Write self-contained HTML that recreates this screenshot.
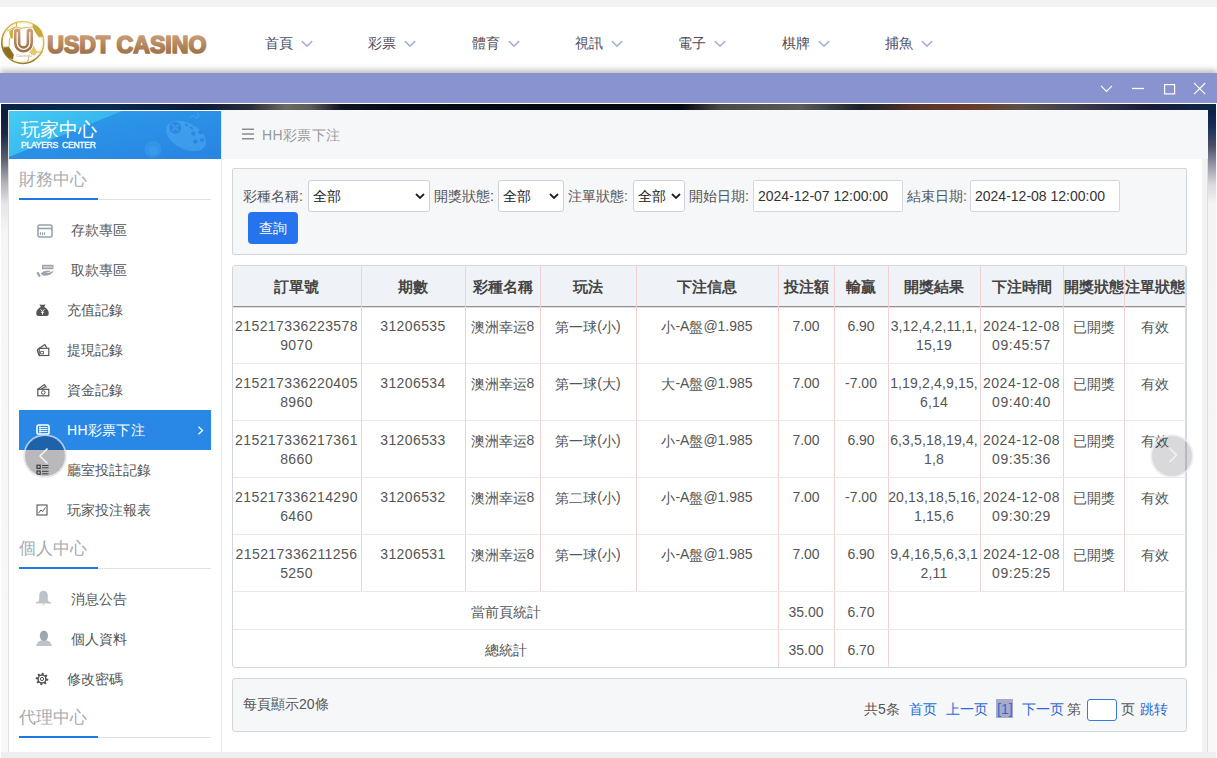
<!DOCTYPE html>
<html><head><meta charset="utf-8">
<style>
*{margin:0;padding:0;box-sizing:border-box}
html,body{width:1217px;height:758px;overflow:hidden;background:#f3f3f3;font-family:"Liberation Sans",sans-serif;color:#555}
.a{position:absolute}
#hdr{left:0;top:7px;width:1217px;height:66px;background:#fff}
.nav{top:34px;font-size:14px;color:#4d4d5c;line-height:18px;white-space:nowrap}
.nav svg{position:absolute;left:36px;top:6px}
#tb{left:0;top:73px;width:1217px;height:30px;background:#8893cf;box-shadow:0 -3px 6px rgba(0,0,0,.26)}
#frame{left:1px;top:104px;width:1215px;height:648px;background:#fafafa}
#ftop{left:1px;top:104px;width:1215px;height:6px;background:linear-gradient(90deg,#0a2246 0,#0a2a50 100px,#0e1a38 200px,#2a2e38 250px,#6a6a62 285px,#5a5a58 310px,#101420 340px,#060a14 400px,#04060e 680px,#4a4a48 720px,#5a5a58 800px,#1a2228 860px,#5a3426 920px,#6a3a28 970px,#5a5048 1020px,#3a3a48 1080px,#1a1a3a 1150px,#0a2a48 1215px)}
#fleft{left:1px;top:104px;width:7px;height:648px;background:linear-gradient(180deg,#0a1838 0,#1a2848 30px,#5a6070 55px,#b0b0b8 78px,#e6e6ea 100px,#f6f6f6 130px,#f8f8f8 648px)}
#fright{left:1208px;top:104px;width:8px;height:648px;background:linear-gradient(180deg,#0a1a3a 0,#12305a 22px,#4a5068 42px,#9a9aa8 62px,#d8d8de 80px,#f4f4f4 100px,#f8f8f8 648px)}
#panel{left:8px;top:110px;width:1200px;height:642px;background:#fff;border-left:1px solid #e0e0e0}
#side{left:9px;top:111px;width:213px;height:641px;background:#fff;border-right:1px solid #e6e6e6}
#shead{left:9px;top:111px;width:212px;height:48px;background:linear-gradient(170deg,#2e9ee9 0,#2a90e6 50%,#2884e2 100%);overflow:hidden}
#shl{left:0;top:0;width:212px;height:48px;background:linear-gradient(150deg,#44ccf3 0,#36b2ee 45%,#30a2eb 100%);clip-path:polygon(0 0,113px 0,0 46px)}
.sec{left:19px;font-size:17px;color:#a6abb0;line-height:20px}
.ul{left:19px;width:192px;height:1px;background:#e2e2e2}
.ulb{left:19px;width:79px;height:2px;background:#1d78e0}
.mi{font-size:14px;line-height:16px;color:#555;white-space:nowrap}
#main{left:221px;top:110px;width:987px;height:49px;background:#f6f7f9}
#mainw{left:221px;top:159px;width:981px;height:593px;background:#fff}
#scr{left:1202px;top:110px;width:6px;height:642px;background:#f3f3f3;border-right:1px solid #dedede}
#filter{left:232px;top:168px;width:955px;height:87px;background:#f6f7f9;border:1px solid #d2d7dd;border-radius:2px}
.lbl{font-size:14px;line-height:16px;color:#555;white-space:nowrap}
.sel{height:32px;background:#fff;border:1px solid #cfd2d6;border-radius:3px;font-size:14px;color:#222}
.sel span{position:absolute;left:4px;top:7px;line-height:16px}
.sel svg{position:absolute;top:12px}
#btn{left:248px;top:212px;width:50px;height:32px;background:#2673ee;border-radius:4px;color:#fff;font-size:14px;line-height:32px;text-align:center}
#tbl{left:232px;top:265px;width:955px;height:403px;border:1px solid #d2d7dd;border-radius:3px;overflow:hidden;background:#fff}
#thead{left:0;top:0;width:953px;height:41px;background:#eff3f7;border-bottom:1px solid #9a8e8e;box-shadow:0 1px 0 rgba(160,150,150,.3)}
.th{top:0;height:41px;line-height:41px;font-size:15px;font-weight:bold;color:#444;text-align:center;white-space:nowrap}
.vl{width:1px;background:#f3d1d2}
.hl{left:0;width:953px;height:1px;background:#e8e8e8}
.cj{position:relative;top:1px}
.td{font-size:14px;line-height:19px;color:#555;text-align:center;white-space:nowrap}
.num{letter-spacing:.4px}
#pg{left:232px;top:678px;width:955px;height:54px;background:#f6f7f9;border:1px solid #d2d7dd;border-radius:3px}
.pl{font-size:14px;line-height:16px;white-space:nowrap}
.blue{color:#2c6ad8}
#bot{left:1px;top:752px;width:1215px;height:6px;background:#eeeeee}
#wl{left:0;top:103px;width:1px;height:655px;background:#fff}
#wr{left:1216px;top:103px;width:1px;height:655px;background:#fff}
.circ{width:40px;height:40px;border-radius:50%;background:rgba(0,0,12,.275);box-shadow:0 0 0 1.8px rgba(222,222,230,.75)}
</style></head><body>
<div id="hdr" class="a"></div>
<!-- logo -->
<svg class="a" style="left:0;top:18px" width="48" height="50" viewBox="0 18 48 50">
 <defs>
  <linearGradient id="gold" x1="0.8" y1="0" x2="0.2" y2="1"><stop offset="0" stop-color="#e8d27a"/><stop offset=".45" stop-color="#cfae3c"/><stop offset=".8" stop-color="#8c6c1e"/><stop offset="1" stop-color="#b8963c"/></linearGradient>
  <linearGradient id="br" x1="0" y1="0" x2="0" y2="1"><stop offset="0" stop-color="#cc9e7a"/><stop offset="1" stop-color="#9c7048"/></linearGradient>
 </defs>
 <circle cx="22.8" cy="42.4" r="21" fill="#fff" stroke="url(#gold)" stroke-width="1.5"/>
 <circle cx="22.8" cy="42.4" r="19.3" fill="none" stroke="#e0c870" stroke-width=".5" opacity=".6"/>
 <g fill="none" stroke="#cdb050" stroke-width=".9">
  <path d="M16.5 22V26.5M22 28L32.5 27M38.5 37L43.5 36.5M37 52H43M34 55.5L37 52M29 57L27 63.5M9 47L3 47M9.5 38L9 47M7 31L16.5 26.5"/>
 </g>
 <path d="M33 23.8L38 26.5 41.5 30.5 43.3 36 38.5 37 34.5 31 32.5 27Z" fill="#c8a838"/>
 <path d="M9 31.5L16.5 26.5 22 28 15.5 38 10.5 38.5Z" fill="#d0b03c"/>
 <path d="M3 47.5L9 47 13.8 54.5 13 59.5 8.5 57.5 4.5 52.5Z" fill="#8e6e22"/>
 <path d="M33 44.5L37 51.5 34 55.5 29 52.5Z" fill="#e2ca6a"/>
 <path d="M17.2 31.6 V43 A6.3 6.3 0 0 0 29.8 43 V31.6" fill="none" stroke="#fff" stroke-width="8.4" stroke-linecap="round"/>
 <path d="M17.2 31.6 V43 A6.3 6.3 0 0 0 29.8 43 V31.6" fill="none" stroke="url(#br)" stroke-width="6.4" stroke-linecap="round"/>
 <path d="M17.2 32.6 V43 A6.3 6.3 0 0 0 29.8 43 V32.6" fill="none" stroke="#fff" stroke-width="1.3" stroke-linecap="round" opacity=".95"/>
 <text x="24" y="56.8" font-size="4.2" fill="#b89a80" text-anchor="middle" font-family="Liberation Sans">CasinoU</text>
</svg>
<svg class="a" style="left:45px;top:28px" width="170" height="32">
 <defs><linearGradient id="br2" x1="0" y1="0" x2="0" y2="1"><stop offset="0" stop-color="#d2a680"/><stop offset="1" stop-color="#95683f"/></linearGradient></defs>
 <text x="2.2" y="24.6" font-family="Liberation Sans" font-weight="bold" font-size="23.6" fill="url(#br2)" stroke="url(#br2)" stroke-width="1.7" stroke-linejoin="round" textLength="159.2" lengthAdjust="spacingAndGlyphs">USDT CASINO</text>
</svg>
<!-- nav -->
<div class="a nav" style="left:265px">首頁<svg width="12" height="7" viewBox="0 0 12 7"><path d="M.8 1.2L6 6.2 11.2 1.2" fill="none" stroke="#a9b4d4" stroke-width="1.6"/></svg></div>
<div class="a nav" style="left:368px">彩票<svg width="12" height="7" viewBox="0 0 12 7"><path d="M.8 1.2L6 6.2 11.2 1.2" fill="none" stroke="#a9b4d4" stroke-width="1.6"/></svg></div>
<div class="a nav" style="left:472px">體育<svg width="12" height="7" viewBox="0 0 12 7"><path d="M.8 1.2L6 6.2 11.2 1.2" fill="none" stroke="#a9b4d4" stroke-width="1.6"/></svg></div>
<div class="a nav" style="left:575px">視訊<svg width="12" height="7" viewBox="0 0 12 7"><path d="M.8 1.2L6 6.2 11.2 1.2" fill="none" stroke="#a9b4d4" stroke-width="1.6"/></svg></div>
<div class="a nav" style="left:678px">電子<svg width="12" height="7" viewBox="0 0 12 7"><path d="M.8 1.2L6 6.2 11.2 1.2" fill="none" stroke="#a9b4d4" stroke-width="1.6"/></svg></div>
<div class="a nav" style="left:782px">棋牌<svg width="12" height="7" viewBox="0 0 12 7"><path d="M.8 1.2L6 6.2 11.2 1.2" fill="none" stroke="#a9b4d4" stroke-width="1.6"/></svg></div>
<div class="a nav" style="left:885px">捕魚<svg width="12" height="7" viewBox="0 0 12 7"><path d="M.8 1.2L6 6.2 11.2 1.2" fill="none" stroke="#a9b4d4" stroke-width="1.6"/></svg></div>

<!-- title bar -->
<div id="tb" class="a"></div>
<svg class="a" style="left:1090px;top:75px" width="127" height="27" viewBox="0 0 127 27">
 <path d="M11 10.8L16.5 16.5 22 10.8" fill="none" stroke="#fff" stroke-width="1.1"/>
 <path d="M42 13.5H54" stroke="#fff" stroke-width="1.3"/>
 <rect x="74.6" y="9.6" width="10" height="9.3" fill="none" stroke="#fff" stroke-width="1.2"/>
 <path d="M104 8L115.3 19.2M115.3 8L104 19.2" stroke="#fff" stroke-width="1.1"/>
</svg>
<div class="a" style="left:0;top:103px;width:1217px;height:1px;background:#fff"></div>
<div id="frame" class="a"></div>
<div id="fleft" class="a"></div>
<div id="fright" class="a"></div>
<div id="ftop" class="a"></div>
<div id="panel" class="a"></div>
<div id="scr" class="a"></div>
<div id="main" class="a"></div>
<div id="mainw" class="a"></div>
<div id="bot" class="a"></div><div id="wl" class="a"></div><div id="wr" class="a"></div>

<!-- sidebar -->
<div id="side" class="a"></div>
<div id="shead" class="a">
 <div id="shl" class="a"></div>
 <svg class="a" style="left:0;top:0" width="212" height="48" viewBox="0 0 212 48">
  <g transform="rotate(28 177 25)"><ellipse cx="177" cy="25" rx="21.5" ry="13" fill="#5cb6f4" opacity=".4"/></g>
  <circle cx="166.3" cy="16.8" r="6" fill="#2a80e0" opacity=".8"/>
  <path d="M163 13.5L169.5 20M169.5 13.5L163 20" stroke="#4aa4ee" stroke-width="1.6" opacity=".7"/>
  <path d="M176 13L179 15M181 16L184 18" stroke="#2a80e0" stroke-width="1.6" opacity=".8"/>
  <circle cx="184.3" cy="22.6" r="2.1" fill="#2a80e0" opacity=".85"/><circle cx="191.4" cy="21.3" r="2.1" fill="#2a80e0" opacity=".85"/>
  <circle cx="186.4" cy="30.6" r="2.1" fill="#2a80e0" opacity=".85"/><circle cx="193" cy="29" r="2.1" fill="#2a80e0" opacity=".85"/>
  <path d="M181 7Q184 3 186 6Q188 9 190 4L187 0" fill="none" stroke="#5cb6f4" stroke-width="1" opacity=".5"/>
  <circle cx="144" cy="38.5" r="8.5" fill="#5cb6f4" opacity=".22"/>
  <circle cx="144" cy="40" r="4.5" fill="#5cb6f4" opacity=".2"/>
 </svg>
 <div class="a" style="left:12px;top:8px;font-size:19px;line-height:22px;color:#fff;white-space:nowrap">玩家中心</div>
 <div class="a" style="left:12px;top:29px;font-size:8.6px;line-height:10px;color:#fff;white-space:nowrap;-webkit-text-stroke:.3px #fff;letter-spacing:-.3px">PLAYERS&nbsp; CENTER</div>
</div>
<div class="a sec" style="top:170px">財務中心</div>
<div class="a ul" style="top:199px"></div><div class="a ulb" style="top:198px"></div>

<svg class="a" style="left:37px;top:224px" width="16" height="14" viewBox="0 0 16 14"><rect x="1" y="1" width="14" height="12" rx="1.5" fill="none" stroke="#9aa3ab" stroke-width="1.6"/><path d="M1 4.5H15" stroke="#9aa3ab" stroke-width="1.6"/><path d="M3.5 8.2V11M5.5 8.2V11M7.5 8.2V11" stroke="#9aa3ab" stroke-width="1.1"/></svg>
<div class="a mi" style="left:71px;top:222px">存款專區</div>
<svg class="a" style="left:36px;top:264px" width="18" height="14" viewBox="0 0 18 14"><rect x="6.6" y="1.4" width="10.2" height="3.2" fill="#c2c9ce" stroke="#9aa3ab" stroke-width="1.2"/><path d="M4.8 9.6Q7 6.8 10.2 6.8H13.8Q14.8 7.4 13.8 8.3H9.5Q12 9.3 14.2 8.6Q16.2 7.6 17.8 6.2Q17 9.2 13.8 10.8Q11 12 6.5 11.6Z" fill="#9aa3ab"/><path d="M1.4 8.2L3.8 12.6" stroke="#9aa3ab" stroke-width="2.2"/></svg>
<div class="a mi" style="left:71px;top:262px">取款專區</div>
<svg class="a" style="left:36px;top:303px" width="13" height="14" viewBox="0 0 13 14"><path d="M3.5 1.2Q6.5 2.2 9.5 1.2L8.2 4Q12.8 6 12.8 10.5Q12.8 13 10.5 13H2.5Q.2 13 .2 10.5Q.2 6 4.8 4Z" fill="#555"/><path d="M4.6 6.3L6.5 8.6 8.4 6.3M6.5 8.6V11.8M4.9 9.3H8.1" stroke="#fff" stroke-width=".9" fill="none"/></svg>
<div class="a mi" style="left:67px;top:302px">充值記錄</div>
<svg class="a" style="left:36px;top:343px" width="14" height="14" viewBox="0 0 14 14"><path d="M1.2 6.8L8.8 1.6 10.8 4.6" fill="none" stroke="#555" stroke-width="1.2"/><path d="M1.2 6.8L2.8 12" fill="none" stroke="#555" stroke-width="1.2"/><rect x="3.2" y="5.3" width="9.6" height="7.2" fill="#fff" stroke="#555" stroke-width="1.2"/><rect x="4.6" y="8.6" width="3" height="2.2" fill="none" stroke="#555" stroke-width=".8"/></svg>
<div class="a mi" style="left:67px;top:342px">提現記錄</div>
<svg class="a" style="left:36px;top:383px" width="14" height="14" viewBox="0 0 14 14"><path d="M1.5 6.5L8.5 1.5 10.5 4.5M2.5 8L10 3.2" fill="none" stroke="#555" stroke-width="1.1"/><rect x="1.8" y="6.3" width="11" height="6.5" fill="#fff" stroke="#555" stroke-width="1.2"/><circle cx="7.3" cy="9.5" r="1.8" fill="none" stroke="#555" stroke-width="1"/></svg>
<div class="a mi" style="left:67px;top:382px">資金記錄</div>
<div class="a" style="left:19px;top:410px;width:192px;height:40px;background:#2988e6"></div>
<svg class="a" style="left:36px;top:424px" width="14" height="11" viewBox="0 0 14 11"><rect x="1" y="1" width="12" height="9" rx="1.8" fill="none" stroke="#fff" stroke-width="1.6"/><path d="M3 3.6H11.5M3 5.5H11.5M3 7.4H11.5" stroke="#fff" stroke-width="1"/><path d="M4 1.5V9.5" stroke="#fff" stroke-width=".8"/></svg>
<div class="a mi" style="left:67px;top:422px;color:#fff;letter-spacing:.3px">HH彩票下注</div>
<svg class="a" style="left:197px;top:426px" width="7" height="9" viewBox="0 0 7 9"><path d="M1.5 .8L5.5 4.5 1.5 8.2" fill="none" stroke="#fff" stroke-width="1.3"/></svg>
<svg class="a" style="left:36px;top:464px" width="13" height="12" viewBox="0 0 13 12"><rect x="1" y="1.2" width="3.2" height="3.2" fill="none" stroke="#555" stroke-width="1.2"/><rect x="1" y="7" width="3.2" height="3.2" fill="none" stroke="#555" stroke-width="1.2"/><path d="M6 1.5H12.5M6 3.8H12.5M6 7.3H12.5M6 9.8H12.5" stroke="#555" stroke-width="1"/></svg>
<div class="a mi" style="left:67px;top:462px">廳室投註記錄</div>
<svg class="a" style="left:36px;top:504px" width="12" height="12" viewBox="0 0 12 12"><rect x="1" y="1" width="10" height="10" fill="none" stroke="#555" stroke-width="1.1"/><path d="M2.5 9L5 6 6.5 7.5 9.5 3.5" fill="none" stroke="#555" stroke-width="1"/></svg>
<div class="a mi" style="left:67px;top:502px">玩家投注報表</div>

<div class="a sec" style="top:539px">個人中心</div>
<div class="a ul" style="top:568px"></div><div class="a ulb" style="top:567px"></div>
<svg class="a" style="left:35px;top:590px" width="17" height="16" viewBox="0 0 17 16"><path d="M8.5 .8Q12.6 .8 12.8 5.5V10.2Q13 11.6 16.2 12.6V13.4H.8V12.6Q4 11.6 4.2 10.2V5.5Q4.4 .8 8.5 .8Z" fill="#bcc3c9"/><path d="M7.3 14.2H9.7L8.5 15.4Z" fill="#bcc3c9"/></svg>
<div class="a mi" style="left:71px;top:591px">消息公告</div>
<svg class="a" style="left:36px;top:630px" width="16" height="17" viewBox="0 0 16 17"><path d="M.3 16Q.6 11.8 5 10.6L11 10.6Q15.4 11.8 15.7 16Z" fill="#bcc3c9"/><ellipse cx="7.9" cy="5.8" rx="4.1" ry="5.2" fill="#9ea7ae"/></svg>
<div class="a mi" style="left:71px;top:631px">個人資料</div>
<svg class="a" style="left:35px;top:672px" width="14" height="14" viewBox="0 0 14 14"><path d="M13.30 7.00 L13.25 7.82 L13.09 8.63 L11.25 8.76 L10.98 9.30 L10.65 9.80 L11.45 11.45 L10.84 12.00 L10.15 12.46 L8.76 11.25 L8.19 11.44 L7.60 11.56 L7.00 13.30 L6.18 13.25 L5.37 13.09 L5.24 11.25 L4.70 10.98 L4.20 10.65 L2.55 11.45 L2.00 10.84 L1.54 10.15 L2.75 8.76 L2.56 8.19 L2.44 7.60 L0.70 7.00 L0.75 6.18 L0.91 5.37 L2.75 5.24 L3.02 4.70 L3.35 4.20 L2.55 2.55 L3.16 2.00 L3.85 1.54 L5.24 2.75 L5.81 2.56 L6.40 2.44 L7.00 0.70 L7.82 0.75 L8.63 0.91 L8.76 2.75 L9.30 3.02 L9.80 3.35 L11.45 2.55 L12.00 3.16 L12.46 3.85 L11.25 5.24 L11.44 5.81 L11.56 6.40Z" fill="#555"/><circle cx="7" cy="7" r="3.2" fill="#fff"/><circle cx="7" cy="7" r="1.6" fill="none" stroke="#555" stroke-width="1"/></svg>
<div class="a mi" style="left:67px;top:671px">修改密碼</div>
<div class="a sec" style="top:708px">代理中心</div>
<div class="a ul" style="top:737px"></div><div class="a ulb" style="top:736px"></div>

<!-- main -->
<svg class="a" style="left:242px;top:128px" width="12" height="12" viewBox="0 0 12 12"><path d="M0 1.2H12M0 6H12M0 10.8H12" stroke="#8c8c8c" stroke-width="1.6"/></svg>
<div class="a" style="left:262px;top:127px;font-size:14px;line-height:16px;color:#999;white-space:nowrap;letter-spacing:.4px">HH彩票下注</div>

<div id="filter" class="a"></div>
<div class="a lbl" style="left:243px;top:188px">彩種名稱:</div>
<div class="a sel" style="left:308px;top:180px;width:122px"><span>全部</span><svg style="left:106px" width="10" height="7" viewBox="0 0 10 7"><path d="M1 1L5 5 9 1" fill="none" stroke="#222" stroke-width="1.8"/></svg></div>
<div class="a lbl" style="left:434px;top:188px">開獎狀態:</div>
<div class="a sel" style="left:498px;top:180px;width:66px"><span>全部</span><svg style="left:50px" width="10" height="7" viewBox="0 0 10 7"><path d="M1 1L5 5 9 1" fill="none" stroke="#222" stroke-width="1.8"/></svg></div>
<div class="a lbl" style="left:568px;top:188px">注單狀態:</div>
<div class="a sel" style="left:633px;top:180px;width:52px"><span>全部</span><svg style="left:37px" width="10" height="7" viewBox="0 0 10 7"><path d="M1 1L5 5 9 1" fill="none" stroke="#222" stroke-width="1.8"/></svg></div>
<div class="a lbl" style="left:689px;top:188px">開始日期:</div>
<div class="a sel" style="left:753px;top:180px;width:150px;border-color:#d6d8db;border-radius:2px"><span style="left:4px;color:#333">2024-12-07 12:00:00</span></div>
<div class="a lbl" style="left:907px;top:188px">結束日期:</div>
<div class="a sel" style="left:970px;top:180px;width:150px;border-color:#d6d8db;border-radius:2px"><span style="left:4px;color:#333">2024-12-08 12:00:00</span></div>
<div id="btn" class="a">查詢</div>

<div id="tbl" class="a">
 <div id="thead" class="a"></div>
 <div class="a th" style="left:-1px;width:129px">訂單號</div>
 <div class="a th" style="left:128px;width:104px">期數</div>
 <div class="a th" style="left:232px;width:75px">彩種名稱</div>
 <div class="a th" style="left:307px;width:96px">玩法</div>
 <div class="a th" style="left:403px;width:142px">下注信息</div>
 <div class="a th" style="left:545px;width:56px">投注額</div>
 <div class="a th" style="left:601px;width:54px">輸贏</div>
 <div class="a th" style="left:655px;width:92px">開獎結果</div>
 <div class="a th" style="left:747px;width:83px">下注時間</div>
 <div class="a th" style="left:830px;width:61px">開獎狀態</div>
 <div class="a th" style="left:891px;width:61px">注單狀態</div>
 <div class="a vl" style="left:128px;top:0;height:325px"></div>
 <div class="a vl" style="left:232px;top:0;height:325px"></div>
 <div class="a vl" style="left:307px;top:0;height:325px"></div>
 <div class="a vl" style="left:403px;top:0;height:325px"></div>
 <div class="a vl" style="left:545px;top:0;height:401px"></div>
 <div class="a vl" style="left:601px;top:0;height:401px"></div>
 <div class="a vl" style="left:655px;top:0;height:401px"></div>
 <div class="a vl" style="left:747px;top:0;height:325px"></div>
 <div class="a vl" style="left:830px;top:0;height:325px"></div>
 <div class="a vl" style="left:891px;top:0;height:325px"></div>
 <div class="a vl" style="left:952px;top:0;height:401px"></div>
 <div class="a hl" style="top:97px"></div>
 <div class="a hl" style="top:154px"></div>
 <div class="a hl" style="top:211px"></div>
 <div class="a hl" style="top:268px"></div>
 <div class="a hl" style="top:325px"></div>
 <div class="a hl" style="top:363px"></div>
 <div class="a td" style="left:-1px;width:129px;top:51px;letter-spacing:0.4px">215217336223578<br>9070</div>
 <div class="a td" style="left:128px;width:104px;top:51px;letter-spacing:0.4px">31206535</div>
 <div class="a td" style="left:232px;width:75px;top:51px;letter-spacing:0px"><span class="cj">澳洲幸运</span>8</div>
 <div class="a td" style="left:307px;width:96px;top:51px;letter-spacing:0px"><span class="cj">第一球</span>(<span class="cj">小</span>)</div>
 <div class="a td" style="left:403px;width:142px;top:51px;letter-spacing:0px"><span class="cj">小</span>-A<span class="cj">盤</span>@1.985</div>
 <div class="a td" style="left:545px;width:56px;top:51px;letter-spacing:0px">7.00</div>
 <div class="a td" style="left:601px;width:54px;top:51px;letter-spacing:0px">6.90</div>
 <div class="a td" style="left:655px;width:92px;top:51px;letter-spacing:0.15px">3,12,4,2,11,1,<br>15,19</div>
 <div class="a td" style="left:747px;width:83px;top:51px;letter-spacing:0.55px">2024-12-08<br>09:45:57</div>
 <div class="a td" style="left:830px;width:61px;top:51px;letter-spacing:0px"><span class="cj">已開獎</span></div>
 <div class="a td" style="left:891px;width:61px;top:51px;letter-spacing:0px"><span class="cj">有效</span></div>
 <div class="a td" style="left:-1px;width:129px;top:108px;letter-spacing:0.4px">215217336220405<br>8960</div>
 <div class="a td" style="left:128px;width:104px;top:108px;letter-spacing:0.4px">31206534</div>
 <div class="a td" style="left:232px;width:75px;top:108px;letter-spacing:0px"><span class="cj">澳洲幸运</span>8</div>
 <div class="a td" style="left:307px;width:96px;top:108px;letter-spacing:0px"><span class="cj">第一球</span>(<span class="cj">大</span>)</div>
 <div class="a td" style="left:403px;width:142px;top:108px;letter-spacing:0px"><span class="cj">大</span>-A<span class="cj">盤</span>@1.985</div>
 <div class="a td" style="left:545px;width:56px;top:108px;letter-spacing:0px">7.00</div>
 <div class="a td" style="left:601px;width:54px;top:108px;letter-spacing:0px">-7.00</div>
 <div class="a td" style="left:655px;width:92px;top:108px;letter-spacing:0.15px">1,19,2,4,9,15,<br>6,14</div>
 <div class="a td" style="left:747px;width:83px;top:108px;letter-spacing:0.55px">2024-12-08<br>09:40:40</div>
 <div class="a td" style="left:830px;width:61px;top:108px;letter-spacing:0px"><span class="cj">已開獎</span></div>
 <div class="a td" style="left:891px;width:61px;top:108px;letter-spacing:0px"><span class="cj">有效</span></div>
 <div class="a td" style="left:-1px;width:129px;top:165px;letter-spacing:0.4px">215217336217361<br>8660</div>
 <div class="a td" style="left:128px;width:104px;top:165px;letter-spacing:0.4px">31206533</div>
 <div class="a td" style="left:232px;width:75px;top:165px;letter-spacing:0px"><span class="cj">澳洲幸运</span>8</div>
 <div class="a td" style="left:307px;width:96px;top:165px;letter-spacing:0px"><span class="cj">第一球</span>(<span class="cj">小</span>)</div>
 <div class="a td" style="left:403px;width:142px;top:165px;letter-spacing:0px"><span class="cj">小</span>-A<span class="cj">盤</span>@1.985</div>
 <div class="a td" style="left:545px;width:56px;top:165px;letter-spacing:0px">7.00</div>
 <div class="a td" style="left:601px;width:54px;top:165px;letter-spacing:0px">6.90</div>
 <div class="a td" style="left:655px;width:92px;top:165px;letter-spacing:0.15px">6,3,5,18,19,4,<br>1,8</div>
 <div class="a td" style="left:747px;width:83px;top:165px;letter-spacing:0.55px">2024-12-08<br>09:35:36</div>
 <div class="a td" style="left:830px;width:61px;top:165px;letter-spacing:0px"><span class="cj">已開獎</span></div>
 <div class="a td" style="left:891px;width:61px;top:165px;letter-spacing:0px"><span class="cj">有效</span></div>
 <div class="a td" style="left:-1px;width:129px;top:222px;letter-spacing:0.4px">215217336214290<br>6460</div>
 <div class="a td" style="left:128px;width:104px;top:222px;letter-spacing:0.4px">31206532</div>
 <div class="a td" style="left:232px;width:75px;top:222px;letter-spacing:0px"><span class="cj">澳洲幸运</span>8</div>
 <div class="a td" style="left:307px;width:96px;top:222px;letter-spacing:0px"><span class="cj">第二球</span>(<span class="cj">小</span>)</div>
 <div class="a td" style="left:403px;width:142px;top:222px;letter-spacing:0px"><span class="cj">小</span>-A<span class="cj">盤</span>@1.985</div>
 <div class="a td" style="left:545px;width:56px;top:222px;letter-spacing:0px">7.00</div>
 <div class="a td" style="left:601px;width:54px;top:222px;letter-spacing:0px">-7.00</div>
 <div class="a td" style="left:655px;width:92px;top:222px;letter-spacing:0.15px">20,13,18,5,16,<br>1,15,6</div>
 <div class="a td" style="left:747px;width:83px;top:222px;letter-spacing:0.55px">2024-12-08<br>09:30:29</div>
 <div class="a td" style="left:830px;width:61px;top:222px;letter-spacing:0px"><span class="cj">已開獎</span></div>
 <div class="a td" style="left:891px;width:61px;top:222px;letter-spacing:0px"><span class="cj">有效</span></div>
 <div class="a td" style="left:-1px;width:129px;top:279px;letter-spacing:0.4px">215217336211256<br>5250</div>
 <div class="a td" style="left:128px;width:104px;top:279px;letter-spacing:0.4px">31206531</div>
 <div class="a td" style="left:232px;width:75px;top:279px;letter-spacing:0px"><span class="cj">澳洲幸运</span>8</div>
 <div class="a td" style="left:307px;width:96px;top:279px;letter-spacing:0px"><span class="cj">第一球</span>(<span class="cj">小</span>)</div>
 <div class="a td" style="left:403px;width:142px;top:279px;letter-spacing:0px"><span class="cj">小</span>-A<span class="cj">盤</span>@1.985</div>
 <div class="a td" style="left:545px;width:56px;top:279px;letter-spacing:0px">7.00</div>
 <div class="a td" style="left:601px;width:54px;top:279px;letter-spacing:0px">6.90</div>
 <div class="a td" style="left:655px;width:92px;top:279px;letter-spacing:0.15px">9,4,16,5,6,3,1<br>2,11</div>
 <div class="a td" style="left:747px;width:83px;top:279px;letter-spacing:0.55px">2024-12-08<br>09:25:25</div>
 <div class="a td" style="left:830px;width:61px;top:279px;letter-spacing:0px"><span class="cj">已開獎</span></div>
 <div class="a td" style="left:891px;width:61px;top:279px;letter-spacing:0px"><span class="cj">有效</span></div>
 <div class="a td" style="left:0;width:546px;top:337px">當前頁統計</div>
 <div class="a td" style="left:545px;width:56px;top:337px">35.00</div>
 <div class="a td" style="left:601px;width:54px;top:337px">6.70</div>
 <div class="a td" style="left:0;width:546px;top:375px">總統計</div>
 <div class="a td" style="left:545px;width:56px;top:375px">35.00</div>
 <div class="a td" style="left:601px;width:54px;top:375px">6.70</div>
</div>

<div id="pg" class="a"></div>
<div class="a pl" style="left:243px;top:696px">每頁顯示20條</div>
<div class="a pl" style="left:864px;top:701px">共5条</div>
<div class="a pl blue" style="left:909px;top:701px">首页</div>
<div class="a pl blue" style="left:946px;top:701px">上一页</div>
<div class="a" style="left:996px;top:699px;width:17px;height:19px;background:#a9aac4"></div>
<div class="a pl blue" style="left:997px;top:701px">[1]</div>
<div class="a pl blue" style="left:1022px;top:701px">下一页</div>
<div class="a pl" style="left:1067px;top:701px">第</div>
<div class="a" style="left:1087px;top:699px;width:30px;height:22px;background:#fff;border:1px solid #3b78e0;border-radius:3px"></div>
<div class="a pl" style="left:1121px;top:701px">页</div>
<div class="a pl blue" style="left:1140px;top:701px">跳转</div>

<div class="a circ" style="left:25px;top:436px"></div>
<svg class="a" style="left:37px;top:447px" width="12" height="18" viewBox="0 0 12 18"><path d="M10.5 1.5L3 9 10.5 16.5" fill="none" stroke="#f4f4f6" stroke-width="1.5"/></svg>
<div class="a circ" style="left:1152px;top:436px;background:rgba(0,0,12,.15);box-shadow:0 0 0 1.8px rgba(235,235,240,.8)"></div>
<svg class="a" style="left:1167px;top:446px" width="12" height="18" viewBox="0 0 12 18"><path d="M2.5 2L9.5 9 2.5 16" fill="none" stroke="#f2f2f4" stroke-width="1.4"/></svg>
</body></html>
